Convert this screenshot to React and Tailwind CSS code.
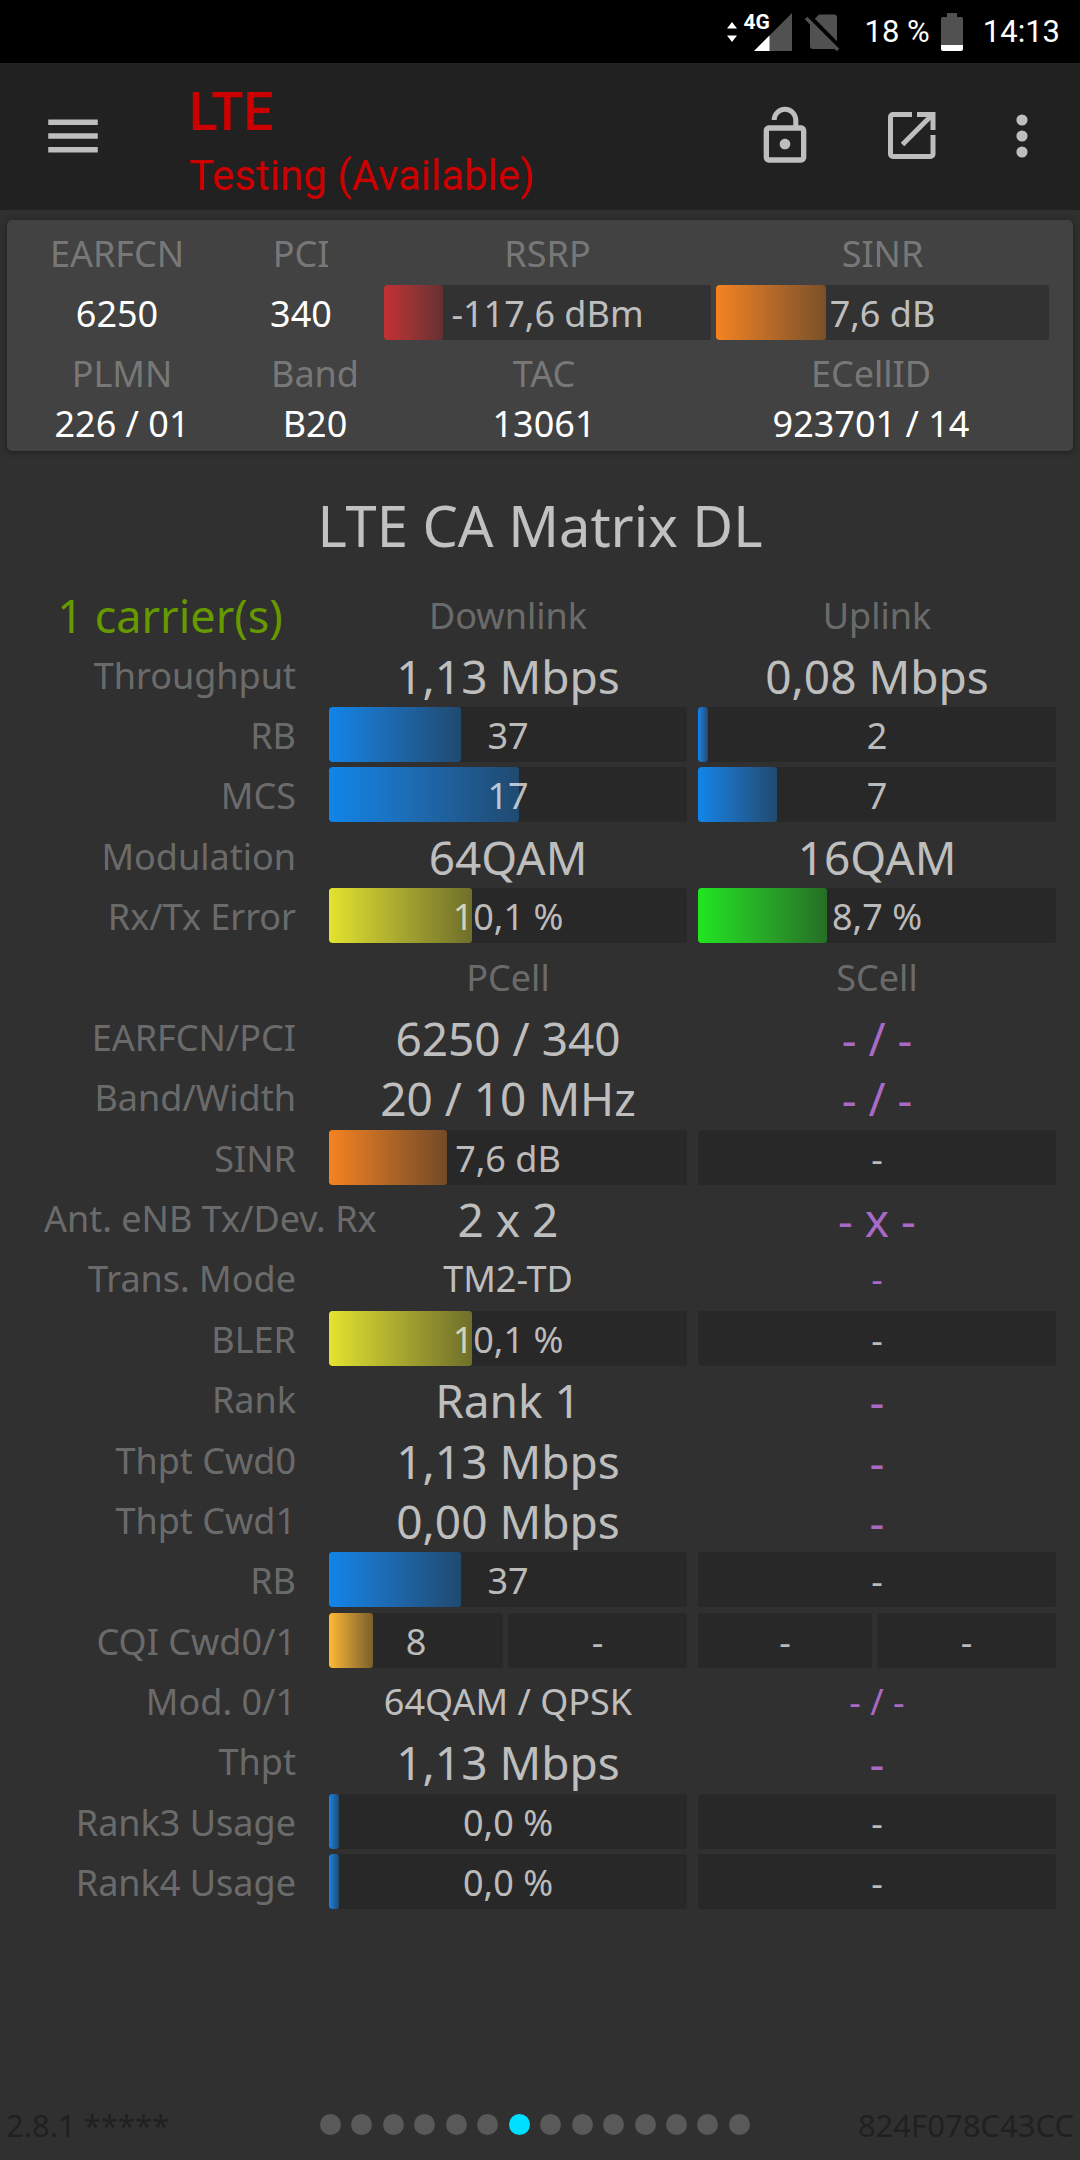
const BLUE = "from-[#0f85ea] to-[#204a70]";
const YELLOW = "from-[#e3e32f] to-[#6f6f2a]";
const GREEN = "from-[#20e61f] to-[#256f25]";
const ORANGE = "from-[#f5831f] to-[#734a25]";
const AMBER = "from-[#ffb933] to-[#7a602b]";

const bar = (text, percent = 0, color = "") => ({ kind: "bar", text, percent, color });
const value = (text) => ({ kind: "value", text });
const small = (text) => ({ kind: "small", text });
const none = (text) => ({ kind: "none", text });
const noneSmall = (text) => ({ kind: "noneSmall", text });
const head = (text) => ({ kind: "head", text });
const pair = (a, b) => ({ kind: "pair", items: [a, b] });

const rows = [
  ["Throughput", value("1,13 Mbps"), value("0,08 Mbps")],
  ["RB", bar("37", 37, BLUE), bar("2", 2, BLUE)],
  ["MCS", bar("17", 53, BLUE), bar("7", 22, BLUE)],
  ["Modulation", value("64QAM"), value("16QAM")],
  ["Rx/Tx Error", bar("10,1 %", 40, YELLOW), bar("8,7 %", 36, GREEN)],
  ["", head("PCell"), head("SCell")],
  ["EARFCN/PCI", value("6250 / 340"), none("- / -")],
  ["Band/Width", value("20 / 10 MHz"), none("- / -")],
  ["SINR", bar("7,6 dB", 33, ORANGE), bar("-")],
  ["Ant. eNB Tx/Dev. Rx", value("2 x 2"), none("- x -")],
  ["Trans. Mode", small("TM2-TD"), noneSmall("-")],
  ["BLER", bar("10,1 %", 40, YELLOW), bar("-")],
  ["Rank", value("Rank 1"), none("-")],
  ["Thpt Cwd0", value("1,13 Mbps"), none("-")],
  ["Thpt Cwd1", value("0,00 Mbps"), none("-")],
  ["RB", bar("37", 37, BLUE), bar("-")],
  ["CQI Cwd0/1", pair(bar("8", 25, AMBER), bar("-")), pair(bar("-"), bar("-"))],
  ["Mod. 0/1", small("64QAM / QPSK"), noneSmall("- / -")],
  ["Thpt", value("1,13 Mbps"), none("-")],
  ["Rank3 Usage", bar("0,0 %", 1, BLUE), bar("-")],
  ["Rank4 Usage", bar("0,0 %", 1, BLUE), bar("-")],
];

const textStyles = {
  value: "text-[46px] text-white/70",
  small: "text-[36px] text-white/70",
  none: "text-[46px] text-[#a969c6]",
  noneSmall: "text-[36px] text-[#a969c6]",
  head: "text-[36px] text-white/30",
};

function Bar({ text, percent, color, track = "bg-[#282828]" }) {
  return (
    <div className={`relative flex h-[55px] w-full items-center justify-center overflow-hidden rounded-[3px] pt-[3px] ${track}`}>
      {percent > 0 && (
        <div
          className={`absolute inset-y-0 left-0 min-w-[10px] rounded-[3px] bg-linear-to-r ${color}`}
          style={{ width: `${percent}%` }}
        />
      )}
      <span className="relative text-[36px] leading-[52px] text-white/70">{text}</span>
    </div>
  );
}

function Cell({ cell }) {
  if (cell.kind === "bar") return <Bar {...cell} />;
  if (cell.kind === "pair") {
    return (
      <div className="grid w-full grid-cols-[174fr_179fr] gap-[5px]">
        <Bar {...cell.items[0]} />
        <Bar {...cell.items[1]} />
      </div>
    );
  }
  return <span className={`pt-[3px] leading-[56px] whitespace-nowrap ${textStyles[cell.kind]}`}>{cell.text}</span>;
}

function StatusBar() {
  return (
    <div className="flex h-[63px] items-center justify-end bg-black pr-[20px] font-['Roboto',sans-serif] text-[31px] leading-[36px] text-white">
      <svg className="mr-[14px]" width="12" height="20" viewBox="0 0 12 20" fill="#fff" aria-hidden="true">
        <path d="M1 6.500 6 0l5 6.500zM1 13.500 6 20l5-6.500z" />
      </svg>
      <div className="relative mr-[13px] flex w-[40px] justify-end">
        <svg width="38" height="38" viewBox="0 0 38 38" aria-hidden="true">
          <path d="M38 0v38H0z" fill="#515151" />
          <path d="M15.500 22.500V38H0z" fill="#fff" />
        </svg>
        <span className="absolute top-[-2px] left-[-8px] text-[21px] leading-[22px] font-bold">4G</span>
      </div>
      <svg className="mr-[24px]" width="36" height="38" viewBox="0 0 36 38" fill="none" aria-hidden="true">
        <path d="M14 1.500h15a3 3 0 0 1 3 3V33a3 3 0 0 1-3 3H8a3 3 0 0 1-3-3V10.500z" fill="#515151" />
        <path d="M3 3 34 34.500" stroke="#000" strokeWidth="6" />
        <path d="M1 5l32 32" stroke="#515151" strokeWidth="3.500" />
      </svg>
      <span>18 %</span>
      <svg className="mr-[20px] ml-[11px]" width="22" height="38" viewBox="0 0 22 38" aria-hidden="true">
        <path d="M6 0h10v4h4a2 2 0 0 1 2 2v26H0V6a2 2 0 0 1 2-2h4z" fill="#515151" />
        <path d="M0 32h22v4a2 2 0 0 1-2 2H2a2 2 0 0 1-2-2z" fill="#fff" />
      </svg>
      <span>14:13</span>
    </div>
  );
}

function AppBar() {
  return (
    <header className="flex h-[147px] items-center bg-[#212121] pb-[2px] font-['Roboto',sans-serif] text-[#bebebe]">
      <button type="button" aria-label="Menu" className="ml-[40px]">
        <svg width="66" height="66" viewBox="0 0 24 24" fill="currentColor" aria-hidden="true">
          <path d="M3 18h18v-2H3v2zm0-5h18v-2H3v2zm0-7v2h18V6H3z" />
        </svg>
      </button>
      <div className="ml-[83px] flex-1 pt-[16px] text-[#cc0000]">
        <h1 className="text-[53px] leading-[64px] font-medium">LTE</h1>
        <p className="text-[42px] leading-[64px]">Testing (Available)</p>
      </div>
      <button type="button" aria-label="Unlock" className="mr-[71px]">
        <svg width="64" height="64" viewBox="0 0 24 24" fill="currentColor" aria-hidden="true">
          <path d="M12 17c1.100 0 2-.9 2-2s-.9-2-2-2-2 .9-2 2 .9 2 2 2zm6-9h-1V6c0-2.760-2.240-5-5-5S7 3.240 7 6h1.900c0-1.710 1.390-3.100 3.100-3.100 1.710 0 3.100 1.390 3.100 3.100v2H6c-1.100 0-2 .9-2 2v10c0 1.100.9 2 2 2h12c1.100 0 2-.9 2-2V10c0-1.100-.9-2-2-2zm0 12H6V10h12v10z" />
        </svg>
      </button>
      <button type="button" aria-label="Open in window" className="mr-[54px]">
        <svg width="48" height="48" viewBox="0 0 48 48" fill="none" stroke="currentColor" strokeWidth="5" aria-hidden="true">
          <path d="M24 2.500H5A2.500 2.500 0 0 0 2.500 5v37A2.500 2.500 0 0 0 5 44.500h37.500A2.500 2.500 0 0 0 45 42V23" />
          <path d="M29 2.500h16V18" />
          <path d="M14.500 32.500 44 3" />
        </svg>
      </button>
      <button type="button" aria-label="More options" className="mr-[26px]">
        <svg width="64" height="64" viewBox="0 0 24 24" fill="currentColor" aria-hidden="true">
          <circle cx="12" cy="6" r="2.100" />
          <circle cx="12" cy="12" r="2.100" />
          <circle cx="12" cy="18" r="2.100" />
        </svg>
      </button>
    </header>
  );
}

function CellSummary() {
  const track = "bg-[#323232]";
  return (
    <section
      aria-label="Serving cell"
      className="mx-[7px] mt-[10px] rounded-[5px] bg-[#424242] pb-[2px] text-center text-[36px] whitespace-nowrap shadow-[0_1px_6px_rgba(0,0,0,0.4)]"
    >
      <div className="grid grid-cols-[202fr_156fr_327fr_333fr] gap-x-[5px] pr-[24px] pl-[9px]">
        {["EARFCN", "PCI", "RSRP", "SINR"].map((t) => (
          <span key={t} className="pt-[2px] leading-[63px] text-white/30">{t}</span>
        ))}
        <span className="pt-[3px] leading-[52px] text-white">6250</span>
        <span className="pt-[3px] leading-[52px] text-white">340</span>
        <Bar text="-117,6 dBm" percent={18} color="from-[#c43033] to-[#663032]" track={track} />
        <Bar text="7,6 dB" percent={33} color="from-[#f5831f] to-[#7a5029]" track={track} />
      </div>
      <div className="grid grid-cols-[230fr_156fr_302fr_352fr] pt-[9px] pr-[26px] leading-[50px]">
        {["PLMN", "Band", "TAC", "ECellID"].map((t) => (
          <span key={t} className="text-white/30">{t}</span>
        ))}
        {["226 / 01", "B20", "13061", "923701 / 14"].map((t) => (
          <span key={t} className="text-white">{t}</span>
        ))}
      </div>
    </section>
  );
}

const rowClass = "grid min-h-[60px] flex-1 grid-cols-[274px_1fr_1fr] gap-x-[11px] pr-[24px] pl-[44px]";
const cellClass = "flex min-w-0 items-center justify-center p-0";

export default function App() {
  return (
    <div className="flex min-h-screen flex-col bg-[#303030] font-['Noto_Sans',sans-serif]">
      <StatusBar />
      <AppBar />
      <CellSummary />
      <main className="flex flex-1 flex-col">
        <h2 className="pt-[34px] pb-[19px] text-center text-[56px] leading-[80px] text-white/70">LTE CA Matrix DL</h2>
        <table className="flex flex-1 flex-col">
          <thead className="flex flex-col">
            <tr className={rowClass}>
              <th scope="col" className="pt-[3px] pr-[22px] text-center text-[45px] leading-[57px] font-normal whitespace-nowrap text-[#669900]">
                1 carrier(s)
              </th>
              <th scope="col" className={`${cellClass} text-[36px] font-normal text-white/30`}>
                <span className="pt-[3px]">Downlink</span>
              </th>
              <th scope="col" className={`${cellClass} text-[36px] font-normal text-white/30`}>
                <span className="pt-[3px]">Uplink</span>
              </th>
            </tr>
          </thead>
          <tbody className="flex flex-1 flex-col">
            {rows.map(([label, a, b], i) => (
              <tr key={i} className={rowClass}>
                <th scope="row" className="self-center pt-[3px] pr-[22px] text-right text-[36px] leading-[56px] font-normal whitespace-nowrap text-white/30">
                  {label}
                </th>
                <td className={cellClass}>
                  <Cell cell={a} />
                </td>
                <td className={cellClass}>
                  <Cell cell={b} />
                </td>
              </tr>
            ))}
          </tbody>
        </table>
      </main>
      <footer className="mt-[177px] grid h-[71px] grid-cols-[314fr_430fr_324fr] items-center px-[6px] text-[31px] leading-[40px] text-[#202020]">
        <span>2.8.1 *****</span>
        <nav aria-label="Pages" className="flex items-center justify-between">
          {Array.from({ length: 14 }, (_, i) => (
            <button
              key={i}
              type="button"
              aria-label={`Page ${i + 1}`}
              aria-current={i === 6 ? "page" : undefined}
              className={`size-[21px] rounded-full ${i === 6 ? "bg-[#00dfff]" : "bg-[#595959]"}`}
            />
          ))}
        </nav>
        <span className="text-right">824F078C43CC</span>
      </footer>
    </div>
  );
}
